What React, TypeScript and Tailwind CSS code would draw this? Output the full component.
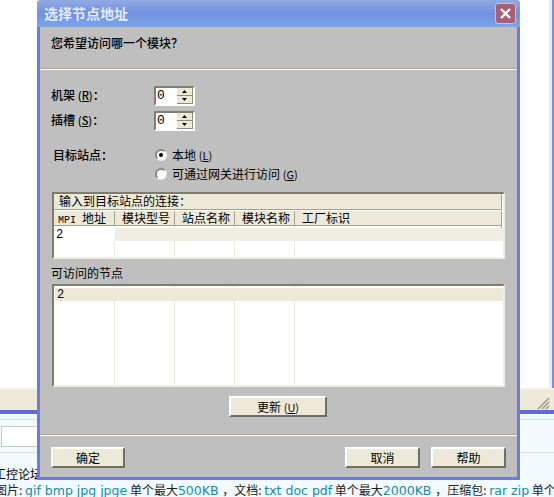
import React from "react";

const U = ({ c }: { c: string }) => (
  <span className="text-[11px]">
    (<u>{c}</u>)
  </span>
);

const Spinner = () => (
  <div className="flex w-[41px] h-[20px] border-2 border-t-[#817e6e] border-l-[#817e6e] border-r-white border-b-white bg-white">
    <div className="w-[21px] pl-[1px] leading-[16px] text-[13px] font-['Liberation_Mono',monospace]">0</div>
    <div className="w-[16px] flex flex-col">
      {[0, 1].map((i) => (
        <div
          key={i}
          className="h-[8px] bg-[#ece9d8] border-b border-r border-[#8f8c7c] flex items-center justify-center"
        >
          <svg width="5" height="3" viewBox="0 0 5 3">
            <path d={i === 0 ? "M2.5 0L5 3H0Z" : "M0 0H5L2.5 3Z"} fill="#000" />
          </svg>
        </div>
      ))}
    </div>
  </div>
);

const Radio = ({ on }: { on?: boolean }) => (
  <div className="w-[12px] h-[12px] rounded-full bg-white border-2 border-t-[#8d8a7c] border-l-[#8d8a7c] border-r-[#f4f3ea] border-b-[#f4f3ea] flex items-center justify-center shrink-0">
    {on && <div className="w-[4px] h-[4px] rounded-full bg-black" />}
  </div>
);

const Btn = ({ w, children }: { w: string; children: React.ReactNode }) => (
  <div
    className={`${w} h-[21px] bg-[#ece9d8] border-2 border-t-white border-l-white border-r-[#716f64] border-b-[#716f64] flex items-center justify-center text-[12px] text-black`}
  >
    {children}
  </div>
);

const Cols = ({ className }: { className: string }) => (
  <div className={`grid grid-cols-[61px_60px_60px_60px_1fr] ${className}`}>
    {[0, 1, 2, 3, 4].map((i) => (
      <div key={i} className={i < 4 ? "border-r border-[#ece9d8]" : ""} />
    ))}
  </div>
);

const Sep = () => (
  <div className="h-[2px] border-t border-[#a8a595] bg-white shrink-0" />
);

const Link = ({ children }: { children: React.ReactNode }) => (
  <span className="text-[#0f8ea6] text-[12.5px] font-['DejaVu_Sans',sans-serif]">{children}</span>
);

const HEAD = ["模块型号", "站点名称", "模块名称", "工厂标识"];

export default function App() {
  return (
    <div className="relative w-[554px] h-[497px] overflow-hidden bg-[#f3fbff] flex flex-col text-black font-['Noto_Sans_CJK_SC',sans-serif]">
      {/* page behind the dialog */}
      <div className="h-[388px] bg-white flex justify-end shrink-0">
        <div className="w-[3px] bg-[#efecdd]" />
        <div className="w-[2px] bg-[#7b8ce4]" />
      </div>
      <div className="h-[22px] bg-[#ece9d8] border-t-2 border-[#f3f1e6] flex justify-end shrink-0">
        <svg width="14" height="14" viewBox="0 0 14 14" className="self-end mr-[4px]">
          <path d="M13 2L2 13M13 6L6 13M13 10L10 13" stroke="#9b988a" strokeWidth="1.5" />
        </svg>
      </div>
      <div className="h-[4px] bg-[#5f6dd4] shrink-0" />
      <div className="h-[6px] border-b border-[#c5e6ee] shrink-0" />
      <div className="h-[33px] border-b border-[#c5e6ee] pt-[6px] pl-[1px] shrink-0">
        <div className="w-[60px] h-[21px] bg-white border border-[#c4c8ca]" />
      </div>
      <div className="mt-[14px] -ml-[6px] text-[12px] leading-[14px] whitespace-nowrap">工控论坛</div>
      <div className="-ml-[5px] text-[12px] leading-[18px] whitespace-nowrap text-[#222]">
        图片: <Link>gif bmp jpg jpge</Link> 单个最大
        <Link>500KB</Link> <span className="ml-[1px]">，文档:</span> <Link>txt doc pdf</Link> 单个最大
        <Link>2000KB</Link> <span className="ml-[1px]">，压缩包:</span> <Link>rar zip</Link> 单个最大
      </div>

      {/* dialog */}
      <div className="absolute left-[37px] top-0 w-[483px] h-[480px] flex flex-col bg-[#6e7bd8] rounded-t-[4px] px-[3px] pb-[3px]">
        <div className="-mx-[3px] h-[27px] shrink-0 rounded-t-[4px] bg-gradient-to-b from-[#93a9e2] via-[#7390e0] to-[#7ca6e8] flex items-center justify-between pl-[7px] pr-[4px]">
          <span className="text-[14px] font-bold text-[#e3ebfa] leading-none -mt-[2px]">选择节点地址</span>
          <div className="w-[21px] h-[21px] rounded-[3px] bg-[#ab5f76] border border-[#b9c3ec] flex items-center justify-center">
            <svg width="13" height="13" viewBox="0 0 13 13">
              <path d="M2 2L11 11M11 2L2 11" stroke="#fff" strokeWidth="2.4" />
            </svg>
          </div>
        </div>

        <div className="flex-1 bg-[#bfbfbf] flex flex-col text-[12px] leading-[16px]">
          <div className="h-[41px] pl-[11px] pt-[8px] shrink-0 font-medium">您希望访问哪一个模块？</div>
          <Sep />

          <div className="flex items-center h-[20px] mt-[16px] pl-[11px]">
            <div className="w-[103px] font-medium -mt-[2px]">
              机架 <U c="R" />：
            </div>
            <Spinner />
          </div>
          <div className="flex items-center h-[20px] mt-[5px] pl-[11px]">
            <div className="w-[103px] font-medium -mt-[3px]">
              插槽 <U c="S" />：
            </div>
            <Spinner />
          </div>

          <div className="flex items-center h-[18px] mt-[15px] pl-[13px]">
            <div className="w-[102px] font-medium">目标站点：</div>
            <Radio on />
            <span className="ml-[5px]">
              本地 <U c="L" />
            </span>
          </div>
          <div className="flex items-center h-[18px] mt-[1px] pl-[115px]">
            <Radio />
            <span className="ml-[5px]">
              可通过网关进行访问 <U c="G" />
            </span>
          </div>

          {/* connection table */}
          <div className="mt-[9px] mx-[12px] h-[67px] shrink-0 flex flex-col bg-white border-2 border-t-[#7f7c6b] border-l-[#7f7c6b] border-r-[#f1efe4] border-b-[#f1efe4]">
            <div className="h-[16px] mr-[1px] shrink-0 bg-[#ece9d8] border-b border-r border-[#a4a18f] pl-[5px] leading-[14px]">
              输入到目标站点的连接：
            </div>
            <div className="mt-[1px] mr-[1px] h-[15px] shrink-0 grid grid-cols-[61px_60px_60px_60px_1fr] bg-[#ece9d8] border-b border-[#a4a18f] leading-[14px]">
              <div className="border-r border-[#a4a18f] pl-[4px] whitespace-nowrap">
                <span className="text-[10px] font-['Liberation_Mono',monospace]">MPI </span>地址
              </div>
              {HEAD.map((h) => (
                <div key={h} className="pl-[7px] whitespace-nowrap border-r border-[#a4a18f]">
                  {h}
                </div>
              ))}
            </div>
            <Cols className="h-[2px] shrink-0" />
            <div className="h-[13px] shrink-0 flex">
              <div className="w-[61px] pl-[2px] leading-[15px] font-['Liberation_Mono',monospace]">2</div>
              <div className="flex-1 bg-[#f0ede2]" />
            </div>
            <Cols className="flex-1" />
          </div>

          <div className="h-[25px] pl-[11px] pt-[2px] flex items-center shrink-0">可访问的节点</div>

          {/* node list */}
          <div className="mx-[12px] h-[103px] shrink-0 flex flex-col bg-white border-2 border-t-[#7f7c6b] border-l-[#7f7c6b] border-r-[#f1efe4] border-b-[#f1efe4]">
            <Cols className="h-[2px] shrink-0" />
            <div className="h-[13px] shrink-0 bg-[#ece9d8] pl-[2px] leading-[15px] ml-[1px] font-['Liberation_Mono',monospace]">2</div>
            <Cols className="flex-1" />
          </div>

          <div className="mt-[9px] flex justify-center pr-[1px] shrink-0">
            <Btn w="w-[98px]">
              更新&nbsp;
              <U c="U" />
            </Btn>
          </div>

          <div className="mt-[17px]">
            <Sep />
          </div>

          <div className="mt-[11px] flex px-[11px] shrink-0">
            <Btn w="w-[75px]">确定</Btn>
            <div className="ml-[220px]">
              <Btn w="w-[75px]">取消</Btn>
            </div>
            <div className="ml-[11px]">
              <Btn w="w-[75px]">帮助</Btn>
            </div>
          </div>
        </div>
      </div>
    </div>
  );
}
